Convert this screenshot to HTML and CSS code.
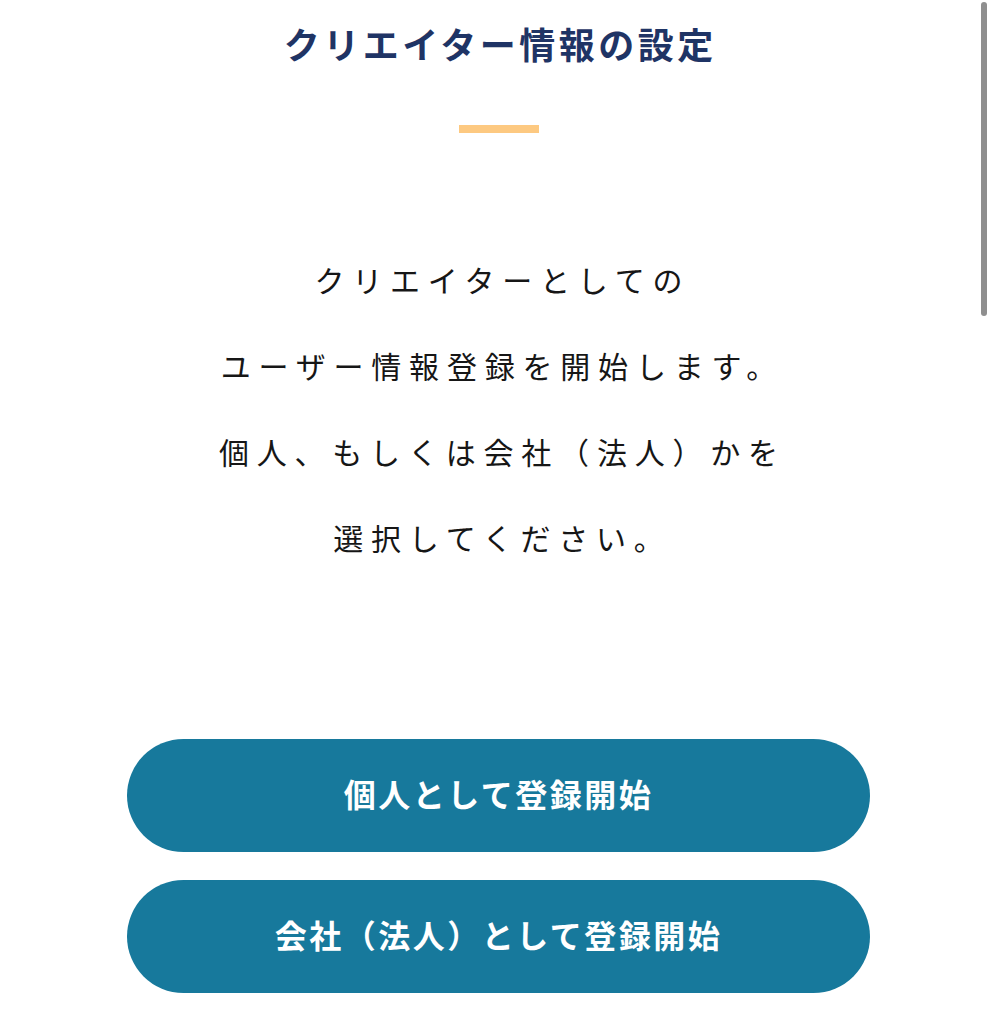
FILE: index.html
```html
<!DOCTYPE html>
<html lang="ja">
<head>
    <meta charset="UTF-8">
    <meta name="viewport" content="width=device-width, initial-scale=1.0">
    <title>クリエイター情報の設定</title>
    <link rel="stylesheet" href="styles.css">
</head>
<body>
    <div class="page">
        <h1 class="page-title">クリエイター情報の設定</h1>
        <span class="title-bar"></span>

        <p class="lead">
            クリエイターとしての<br>
            ユーザー情報登録を開始します。<br>
            個人、もしくは会社（法人）かを<br>
            選択してください。
        </p>

        <div class="actions">
            <a href="##" class="btn-start">個人として登録開始</a>
            <a href="##" class="btn-start">会社（法人）として登録開始</a>
        </div>
    </div>

    <!-- スクロールバー -->
    <span class="scroll-thumb"></span>
</body>
</html>
```

FILE: styles.css
```css
*{
    padding: 0;
    margin: 0;
    box-sizing: border-box;
}

html, body{
    height: 100%;
    overflow: hidden;
}

body{
    background-color: #fff;
    color: #1a1a1a;
    font-family: "Noto Sans CJK JP", "Noto Sans", sans-serif;
}

a{
    text-decoration: none;
}

.page{
    display: flex;
    flex-direction: column;
    align-items: center;
    padding-top: 18px;
}

/* ==================タイトル===================== */
.page-title{
    font-size: 36px;
    line-height: 50px;
    font-weight: 700;
    letter-spacing: 3.5px;
    color: #1f3465;
    margin-right: -3.5px;
}

.title-bar{
    display: block;
    width: 80px;
    height: 8px;
    margin-top: 57px;
    background-color: #fdc981;
}

/* ==================説明文===================== */
.lead{
    margin-top: 103px;
    font-size: 30px;
    line-height: 86px;
    font-weight: 400;
    letter-spacing: 7.8px;
    margin-right: -7.8px;
    text-align: center;
    color: #161616;
}

/* ==================ボタン===================== */
.actions{
    display: flex;
    flex-direction: column;
    gap: 28px;
    margin-top: 159px;
}

.btn-start{
    display: flex;
    align-items: center;
    justify-content: center;
    width: 743px;
    height: 113px;
    padding-bottom: 6px;
    border-radius: 57px;
    background-color: #17799c;
    color: #fff;
    font-size: 32px;
    font-weight: 700;
    letter-spacing: 2.5px;
}

.scroll-thumb{
    position: absolute;
    top: 2px;
    right: 10px;
    width: 6px;
    height: 314px;
    border-radius: 3px;
    background-color: #8f8f8f;
}
```
